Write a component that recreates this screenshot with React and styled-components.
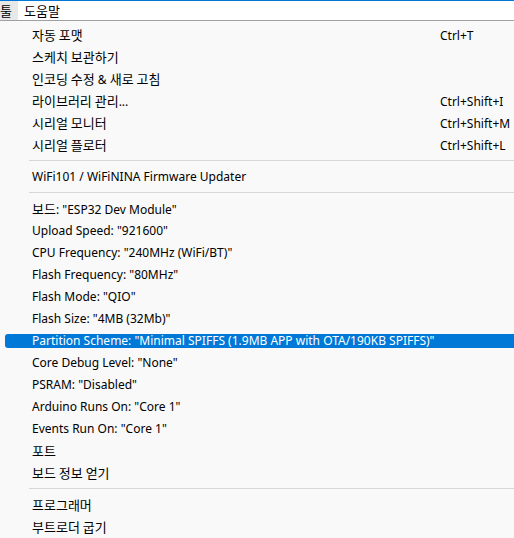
import styled, { createGlobalStyle } from 'styled-components';

const GlobalStyle = createGlobalStyle`
  html, body {
    margin: 0;
    padding: 0;
    background: #f9f9f9;
  }
  body {
    font-family: "Noto Sans", "Noto Sans CJK KR", sans-serif;
    font-size: 12px;
    color: #000;
    overflow: hidden;
  }
`;

const menuBar = ['툴', '도움말'];

const groups = [
  [
    { label: '자동 포맷', key: 'Ctrl+T' },
    { label: '스케치 보관하기' },
    { label: '인코딩 수정 & 새로 고침' },
    { label: '라이브러리 관리...', key: 'Ctrl+Shift+I' },
    { label: '시리얼 모니터', key: 'Ctrl+Shift+M' },
    { label: '시리얼 플로터', key: 'Ctrl+Shift+L' },
  ],
  [{ label: 'WiFi101 / WiFiNINA Firmware Updater' }],
  [
    { label: '보드: "ESP32 Dev Module"' },
    { label: 'Upload Speed: "921600"' },
    { label: 'CPU Frequency: "240MHz (WiFi/BT)"' },
    { label: 'Flash Frequency: "80MHz"' },
    { label: 'Flash Mode: "QIO"' },
    { label: 'Flash Size: "4MB (32Mb)"' },
    { label: 'Partition Scheme: "Minimal SPIFFS (1.9MB APP with OTA/190KB SPIFFS)"', active: true },
    { label: 'Core Debug Level: "None"' },
    { label: 'PSRAM: "Disabled"' },
    { label: 'Arduino Runs On: "Core 1"' },
    { label: 'Events Run On: "Core 1"' },
    { label: '포트' },
    { label: '보드 정보 얻기' },
  ],
  [{ label: '프로그래머' }, { label: '부트로더 굽기' }],
];

// Hangul runs are set a little larger, like Malgun Gothic next to its latin glyphs
const renderText = (text) =>
  text
    .split(/([가-힣]+(?:\s[가-힣]+)*)/)
    .filter(Boolean)
    .map((part, i) =>
      /[가-힣]/.test(part) ? <Hangul key={i}>{part}</Hangul> : <span key={i}>{part}</span>
    );

function App() {
  return (
    <Page>
      <GlobalStyle />
      <MenuBar>
        {menuBar.map((m, i) => (
          <MenuTitle key={m} open={i === 0}>{renderText(m)}</MenuTitle>
        ))}
      </MenuBar>
      <Dropdown>
        {groups.map((items, gi) => (
          <div key={gi}>
            {gi > 0 && <Separator />}
            {items.map((it) => (
              <Item key={it.label}>
                <ItemBar active={it.active}>
                  <Label>{renderText(it.label)}</Label>
                  {it.key && <Shortcut>{it.key}</Shortcut>}
                </ItemBar>
              </Item>
            ))}
          </div>
        ))}
      </Dropdown>
    </Page>
  );
}

export default App;

const Page = styled.div`
  width: 514px;
  height: 538px;
  overflow: hidden;
`;

const Hangul = styled.span`
  font-family: "Noto Sans CJK KR", sans-serif;
  font-size: 13px;
`;

const MenuBar = styled.div`
  display: flex;
  align-items: center;
  height: 19px;
  background: #fff;
  border-top: 1px solid #0078d7;
  border-bottom: 1px solid #a0a0a0;
`;

const MenuTitle = styled.div`
  height: 19px;
  line-height: 19px;
  padding: 0 6px 0 ${(p) => (p.open ? '0' : '6px')};
  background: ${(p) => (p.open ? '#e8e8e8' : 'transparent')};
`;

const Dropdown = styled.div`
  padding-top: 3px;
  background: #f9f9f9;
`;

const Separator = styled.div`
  height: 1px;
  margin: 4px 0 5px 29px;
  background: #d7d7d7;
`;

const Item = styled.div`
  height: 22px;
  display: flex;
  align-items: center;
`;

const ItemBar = styled.div`
  flex: 1;
  display: grid;
  grid-template-columns: 408px 1fr;
  height: 14px;
  align-items: center;
  margin-left: 5px;
  padding-left: 27px;
  border-radius: 3px 0 0 3px;
  background: ${(p) => (p.active ? '#0078d7' : 'transparent')};
  color: ${(p) => (p.active ? '#fff' : '#000')};
  white-space: nowrap;
`;

const Label = styled.span`
  line-height: 14px;
`;

const Shortcut = styled.span`
  line-height: 14px;
`;
